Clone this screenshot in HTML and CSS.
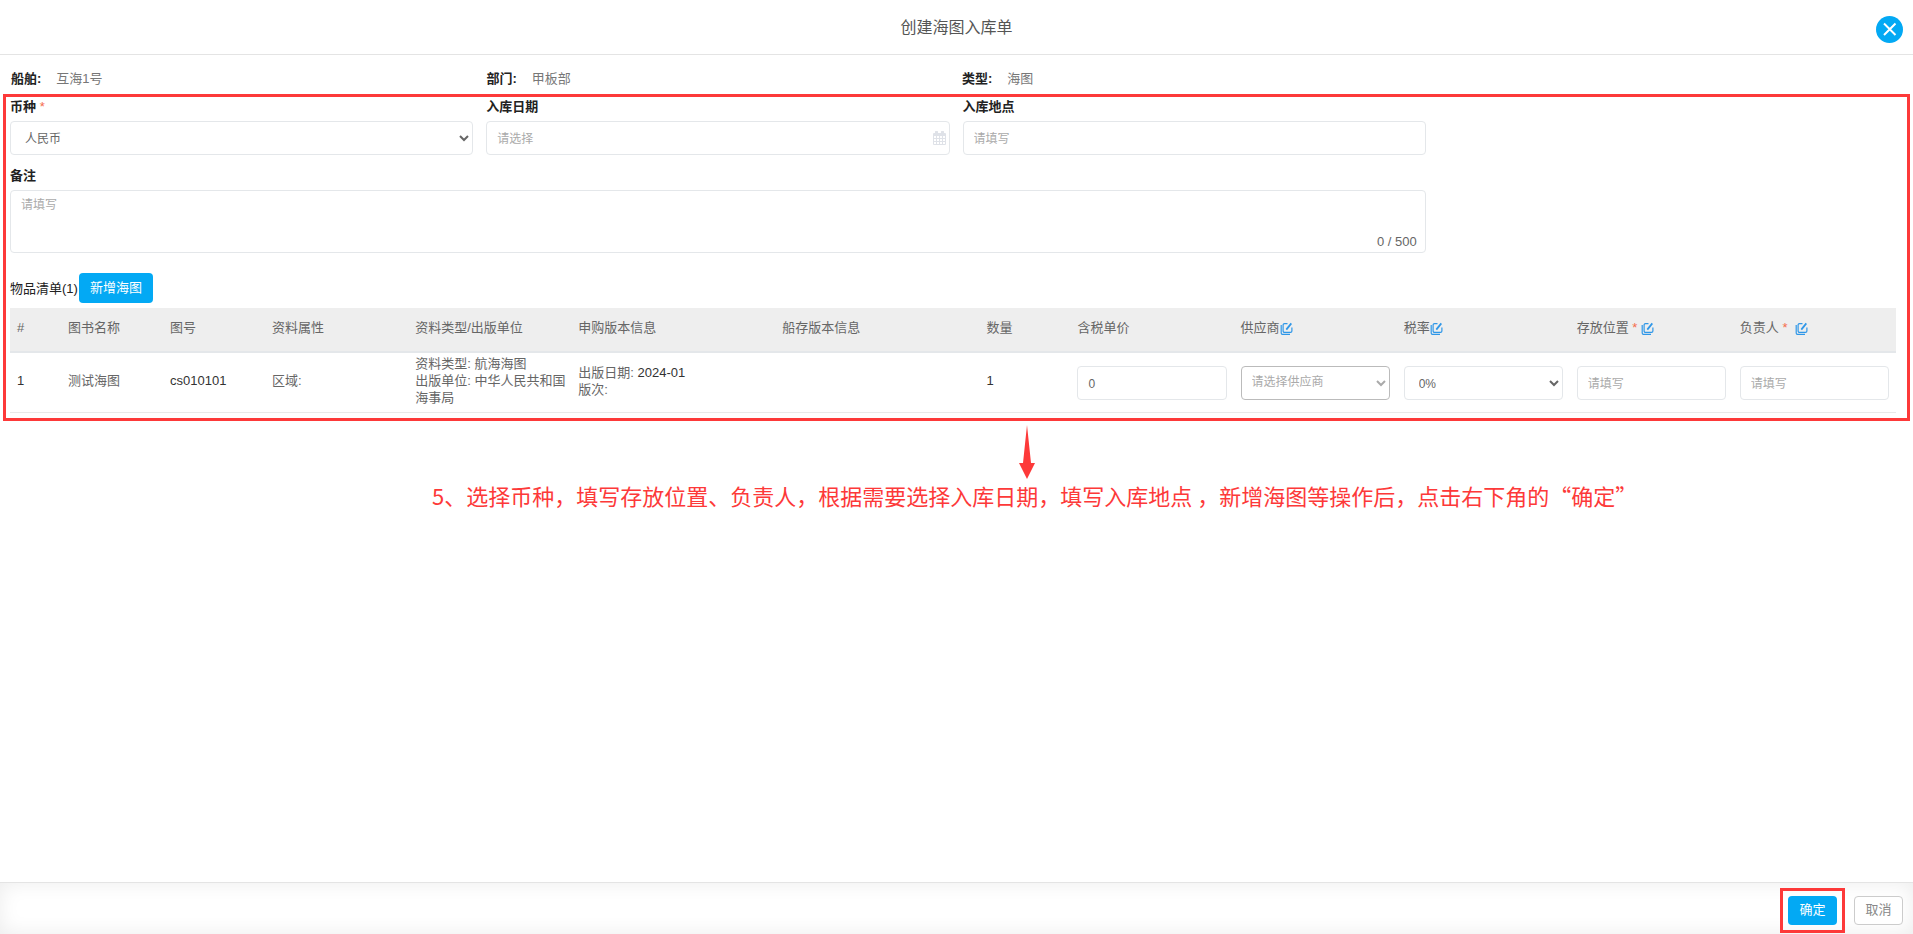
FILE: index.html
```html
<!DOCTYPE html>
<html lang="zh-CN">
<head>
<meta charset="utf-8">
<title>创建海图入库单</title>
<link rel="stylesheet" href="styles.css">
</head>
<body>
<svg class="sprite" aria-hidden="true">
  <symbol id="edit" viewBox="0 0 12 13">
    <path d="M7 1.600H4A1.400 1.400 0 0 0 2.600 3v6A1.400 1.400 0 0 0 4 10.400h6A1.400 1.400 0 0 0 11.400 9V5.600M.7 3v8A1.400 1.400 0 0 0 2 12.400h7.500" fill="none" stroke="currentColor" stroke-width="1.200"/>
    <path d="M5.800 7.600L10.800 1.400" fill="none" stroke="currentColor" stroke-width="1.800"/>
  </symbol>
</svg>
<header class="topbar">
  <h1 class="title">创建海图入库单</h1>
  <button class="close" type="button" aria-label="关闭">
    <svg viewBox="0 0 27 27"><path d="M8 7.500l11.500 11.500M19.500 7.500L8 19" stroke="#fff" stroke-width="2"/></svg>
  </button>
</header>
<main class="content">
  <dl class="info">
    <div class="info-item"><dt>船舶:</dt><dd>互海1号</dd></div>
    <div class="info-item"><dt>部门:</dt><dd>甲板部</dd></div>
    <div class="info-item"><dt>类型:</dt><dd>海图</dd></div>
  </dl>
  <section class="marked">
    <div class="fields">
      <div class="field">
        <label class="label" for="currency">币种 <span class="req">*</span></label>
        <select class="control" id="currency"><option>人民币</option></select>
      </div>
      <div class="field">
        <label class="label" for="date">入库日期</label>
        <div class="with-icon">
          <input class="control" id="date" type="text" placeholder="请选择">
          <svg class="calendar" viewBox="0 0 13 14"><path fill="#dfe2e8" fill-rule="evenodd" d="M0 3a1 1 0 0 1 1-1h1V1a1 1 0 0 1 3 0v1h3V1a1 1 0 0 1 3 0v1h1a1 1 0 0 1 1 1v10a1 1 0 0 1-1 1H1a1 1 0 0 1-1-1zM1 5v2h2V5zM4 5v2h2V5zM7 5v2h2V5zM10 5v2h2V5zM1 8v2h2V8zM4 8v2h2V8zM7 8v2h2V8zM10 8v2h2V8zM1 11v2h2v-2zM4 11v2h2v-2zM7 11v2h2v-2zM10 11v2h2v-2z"/></svg>
        </div>
      </div>
      <div class="field">
        <label class="label" for="place">入库地点</label>
        <input class="control" id="place" type="text" placeholder="请填写">
      </div>
      <div class="field wide">
        <label class="label" for="remark">备注</label>
        <div class="with-icon">
          <textarea class="control area" id="remark" placeholder="请填写"></textarea>
          <span class="count">0 / 500</span>
        </div>
      </div>
    </div>
    <div class="list-head">
      <h2 class="list-title">物品清单(1)</h2>
      <button class="btn primary add" type="button">新增海图</button>
    </div>
    <div class="table-wrap">
    <table class="items">
      <colgroup>
        <col class="w-no"><col class="w-s"><col class="w-s"><col class="w-attr"><col class="w-m"><col class="w-l"><col class="w-l"><col class="w-qty"><col class="w-m"><col class="w-m"><col class="w-tax"><col class="w-m"><col class="w-m">
      </colgroup>
      <thead>
        <tr>
          <th>#</th><th>图书名称</th><th>图号</th><th>资料属性</th><th>资料类型/出版单位</th><th>申购版本信息</th><th>船存版本信息</th><th>数量</th><th>含税单价</th>
          <th>供应商<svg class="edit"><use href="#edit"/></svg></th>
          <th>税率<svg class="edit"><use href="#edit"/></svg></th>
          <th>存放位置 <span class="req">*</span> <svg class="edit"><use href="#edit"/></svg></th>
          <th>负责人 <span class="req">*</span> <svg class="edit gap"><use href="#edit"/></svg></th>
        </tr>
      </thead>
      <tbody>
        <tr>
          <td class="dark">1</td>
          <td>测试海图</td>
          <td class="dark">cs010101</td>
          <td>区域:</td>
          <td>资料类型: 航海海图<br>出版单位: 中华人民共和国海事局</td>
          <td>出版日期: <span class="dark">2024-01</span><br>版次:</td>
          <td></td>
          <td class="dark">1</td>
          <td class="form"><input class="control" type="text" value="0" aria-label="含税单价"></td>
          <td class="form"><select class="control empty" aria-label="供应商"><option>请选择供应商</option></select></td>
          <td class="form"><select class="control" aria-label="税率"><option>0%</option></select></td>
          <td class="form"><input class="control" type="text" placeholder="请填写" aria-label="存放位置"></td>
          <td class="form"><input class="control" type="text" placeholder="请填写" aria-label="负责人"></td>
        </tr>
      </tbody>
    </table>
    </div>
  </section>
  <div class="note">
    <svg class="arrow" viewBox="0 0 16 54"><path fill="#fd3939" d="M8 0L12 38H16L8 54L0 38H4z"/></svg>
    <p class="note-text">5、选择币种，填写存放位置、负责人，根据需要选择入库日期，填写入库地点 ，新增海图等操作后，点击右下角的“确定”</p>
  </div>
</main>
<footer class="footer">
  <span class="mark"><button class="btn primary" type="button">确定</button></span>
  <button class="btn plain" type="button">取消</button>
</footer>
</body>
</html>
```
FILE: styles.css
```css
* { box-sizing: border-box; }
body {
  margin: 0;
  min-height: 100vh;
  display: flex;
  flex-direction: column;
  background: #fff;
  color: #666;
  font: 13px/17px "Liberation Sans", "Noto Sans CJK SC", sans-serif;
}
button, input, select, textarea { font: inherit; }
.sprite { display: none; }
.topbar {
  position: relative;
  height: 55px;
  display: flex;
  justify-content: center;
  align-items: center;
  border-bottom: 1px solid #e4e4e4;
}
.title { margin: 0; font-size: 16px; font-weight: 400; color: #555; }
.close {
  position: absolute;
  right: 10px;
  top: 16px;
  width: 27px;
  height: 27px;
  padding: 0;
  border: 0;
  border-radius: 50%;
  background: #03a9f4;
}
.close svg { display: block; }
.content { flex: 1; }
.info {
  display: grid;
  grid-template-columns: repeat(4, 1fr);
  margin: 0;
  padding: 15px 0 7px 11px;
}
.info-item { display: flex; gap: 15px; }
.info dt { color: #222; font-weight: 700; }
.info dd { margin: 0; color: #777; }
.marked {
  margin: 0 3px;
  padding: 0 5px 5px 4px;
  border: 3px solid #fd3939;
}
.fields {
  display: grid;
  grid-template-columns: repeat(4, 1fr);
  gap: 11px 13px;
}
.field { min-width: 0; }
.wide { grid-column: span 3; }
.label { display: block; padding: 1px 0 6px; color: #222; font-weight: 700; }
.req { color: #f56c4c; font-weight: 400; }
.control {
  display: block;
  width: 100%;
  height: 34px;
  padding: 2px 10px 0;
  border: 1px solid #e4e7ea;
  border-radius: 4px;
  background: #fff;
  color: #666;
  font-size: 12px;
}
.control::placeholder { color: #aaa; }
.empty { padding: 0 6px 2px; border-color: #bbb; color: #aaa; }
.with-icon { position: relative; }
.calendar { position: absolute; right: 4px; top: 10px; width: 13px; height: 14px; }
.area { height: 63px; padding-top: 6px; resize: none; }
.count { position: absolute; right: 9px; bottom: 3px; }
.list-head { display: flex; align-items: center; gap: 1px; padding: 20px 0 5px; }
.list-title { margin: 0; font-size: 13px; font-weight: 400; color: #222; }
.btn {
  height: 29px;
  width: 49px;
  padding: 0 0 1px;
  border: 0;
  border-radius: 4px;
  font-size: 13px;
}
.primary { background: #03a9f4; color: #fff; }
.add { width: 74px; height: 30px; }
.plain { border: 1px solid #ccc; background: #fff; color: #888; }
.table-wrap { padding-right: 6px; }
.items { width: 100%; table-layout: fixed; border-collapse: collapse; }
.items th {
  height: 44px;
  padding: 0 7px 4px;
  border-bottom: 2px solid #e4e7ea;
  background: #eee;
  text-align: left;
  font-weight: 400;
  white-space: nowrap;
}
.items td { height: 60px; padding: 2px 4px 5px 7px; border-bottom: 1px solid #e9e9e9; }
.items .form { padding: 2px 7px 1px 7px; }
.items .dark { color: #333; }
.w-no { width: 51px; }
.w-s { width: 102px; }
.w-attr { width: 143px; }
.w-m { width: 163px; }
.w-l { width: 204px; }
.w-qty { width: 91px; }
.w-tax { width: 173px; }
.edit { width: 13px; height: 13px; color: #2f97e8; vertical-align: -3px; }
.gap { margin-left: 4px; }
.note { display: flex; flex-direction: column; color: #fd3939; padding-top: 4px; }
.arrow { width: 16px; height: 54px; margin-left: 1019px; }
.note-text { margin: 0; padding-left: 432px; font-family: "Noto Sans CJK SC", sans-serif; font-size: 22px; line-height: 32px; white-space: nowrap; }
.footer {
  display: flex;
  justify-content: flex-end;
  align-items: center;
  gap: 9px;
  height: 52px;
  padding: 3px 10px 0 0;
  border-top: 1px solid #e4e4e4;
  box-shadow: inset 0 0 20px rgba(0, 0, 0, 0.08);
}
.mark { display: flex; padding: 5px; border: 3px solid #fd3939; }
```
